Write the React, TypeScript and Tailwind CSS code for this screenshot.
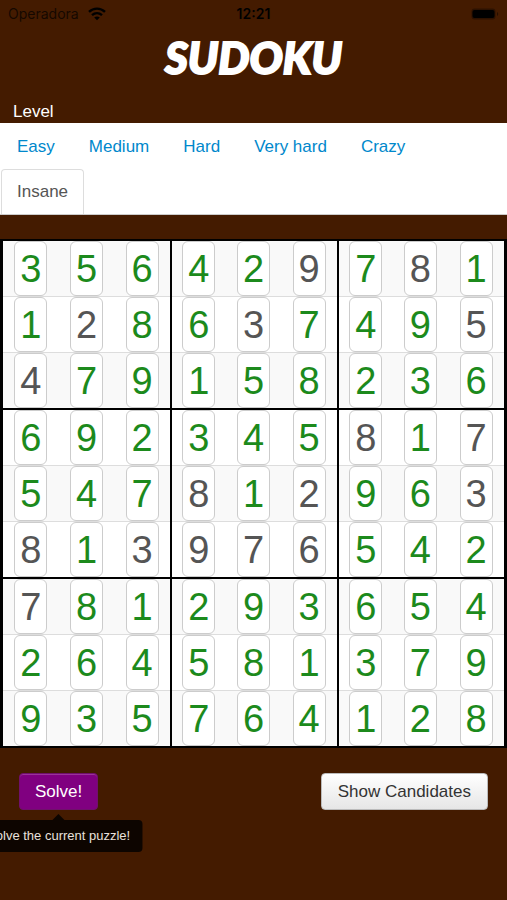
const LEVELS = ['Easy', 'Medium', 'Hard', 'Very hard', 'Crazy', 'Insane'];

// Digits of the solved grid; "given" marks the clues with an x.
const ROWS = [
  { digits: '356429781', given: '.....x.x.' },
  { digits: '128637495', given: '.x..x...x' },
  { digits: '479158236', given: 'x........' },
  { digits: '692345817', given: '......x.x' },
  { digits: '547812963', given: '...x.x..x' },
  { digits: '813976542', given: 'x.xxxx...' },
  { digits: '781293654', given: 'x........' },
  { digits: '264581379', given: '.........' },
  { digits: '935764128', given: '.........' },
];

function StatusBar() {
  return (
    <div className="grid h-7 grid-cols-3 items-center px-2 font-['Inter',sans-serif] text-[14px] leading-5 text-black/70">
      <div className="flex items-center gap-2">
        <span>Operadora</span>
        <svg width="20" height="14" viewBox="0 0 18 14" fill="none" stroke="#000" strokeWidth="2.4" aria-hidden="true">
          <path d="M1 4.8C5.5.5 12.5.5 17 4.8" />
          <path d="M4 8.2c3-2.7 7-2.7 10 0" />
          <path d="M9 13.2 6.2 10.6c1.600-1.400 4-1.400 5.600 0Z" fill="#000" stroke="none" />
        </svg>
      </div>
      <span className="text-center font-semibold text-black">12:21</span>
      <svg className="justify-self-end" width="28" height="12" viewBox="0 0 28 12" aria-hidden="true">
        <rect x="0.5" y="0.5" width="24" height="11" rx="3" fill="#000" fillOpacity="0.35" />
        <rect x="1.500" y="2" width="22" height="8" rx="2" fill="#000" />
        <path d="M26 4c1.6.6 1.6 3.4 0 4Z" fill="#000" fillOpacity="0.45" />
      </svg>
    </div>
  );
}

function LevelTabs() {
  return (
    <nav aria-label="Level" className="border-b border-[#ccc] bg-white pt-px">
      <ul className="flex flex-wrap gap-x-0.5 pl-px">
        {LEVELS.map((level) => (
          <li key={level} className={level === 'Insane' ? 'basis-full' : ''}>
            <a
              href="#"
              aria-current={level === 'Insane' ? 'page' : undefined}
              className={
                level === 'Insane'
                  ? 'inline-flex h-[45px] items-center rounded-t border border-b-0 border-[#ddd] px-[15px] text-[#555]'
                  : 'inline-flex h-[45px] items-center border border-transparent px-[15px] text-[#0088cc]'
              }
            >
              {level}
            </a>
          </li>
        ))}
      </ul>
    </nav>
  );
}

function Board() {
  return (
    <table className="w-full table-fixed border-separate border-spacing-0 border-x-[3px] border-t-2 border-b-2 border-black bg-white">
      <tbody>
        {ROWS.map((row, r) => (
          <tr key={r} className={r % 2 === 0 ? 'bg-[#f9f9f9]' : 'bg-white'}>
            {row.digits.split('').map((digit, c) => (
              <td
                key={c}
                className={[
                  'border-black p-0',
                  r === 3 || r === 6 ? 'border-t-2' : '',
                  c === 3 || c === 6 ? 'border-l-2' : '',
                ].join(' ')}
              >
                <div className={r % 3 === 0 ? '' : 'border-t border-[#ddd]'}>
                  <input
                    type="text"
                    defaultValue={digit}
                    maxLength={1}
                    readOnly={row.given[c] === 'x'}
                    aria-label={`Row ${r + 1}, column ${c + 1}`}
                    className={`mx-auto block h-[55px] w-[33px] rounded-md border border-[#ccc] bg-white px-0 pt-0.5 pb-0 text-center text-[38px] leading-10 outline-none ${
                      row.given[c] === 'x' ? 'text-[#555]' : 'text-[#1c8a1c]'
                    }`}
                  />
                </div>
              </td>
            ))}
          </tr>
        ))}
      </tbody>
    </table>
  );
}

export default function App() {
  return (
    <div className="min-h-screen overflow-x-hidden bg-[#441b00] font-['Liberation_Sans',Arial,sans-serif] text-[17px] leading-5">
      <StatusBar />
      <h1 className="h-[60px] text-center font-['Lato',sans-serif] text-[44px] leading-[58px] font-black text-white italic [-webkit-text-stroke:2px_white]">
        SUDOKU
      </h1>
      <div className="flex h-[35px] items-end px-[13px] pb-px text-white">Level</div>
      <LevelTabs />
      <div className="pt-6">
        <Board />
      </div>
      <div className="flex items-start justify-between px-[19px] pt-[25px]">
        <div className="relative">
          <button
            type="button"
            aria-describedby="solve-tip"
            className="h-[37px] rounded border border-[#70106c] bg-[#800080] px-[15px] text-white shadow-[inset_0_1px_0_rgba(255,255,255,0.2)]"
          >
            Solve!
          </button>
          <div
            id="solve-tip"
            role="tooltip"
            className="absolute top-full left-1/2 mt-2.5 -translate-x-1/2 rounded bg-[#0d0500] px-3 py-1.5 text-[13px] whitespace-nowrap text-[#e8e0dc]"
          >
            <span className="absolute bottom-full left-1/2 -translate-x-1/2 border-x-[6px] border-b-[6px] border-x-transparent border-b-[#0d0500]" />
            Solve the current puzzle!
          </div>
        </div>
        <button
          type="button"
          className="h-[37px] rounded border border-[#bbb] bg-linear-to-b from-white to-[#e6e6e6] px-4 text-[#333]"
        >
          Show Candidates
        </button>
      </div>
    </div>
  );
}
